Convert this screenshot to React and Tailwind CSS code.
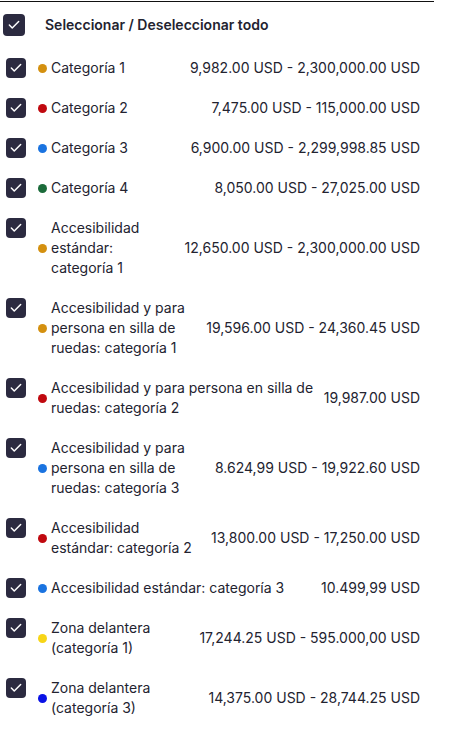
import { Check } from "lucide-react";

const rows = [
  { label: "Categoría 1", color: "bg-[#d4900f]", price: "9,982.00 USD - 2,300,000.00 USD" },
  { label: "Categoría 2", color: "bg-[#c0090f]", price: "7,475.00 USD - 115,000.00 USD" },
  { label: "Categoría 3", color: "bg-[#1a73e0]", price: "6,900.00 USD - 2,299,998.85 USD" },
  { label: "Categoría 4", color: "bg-[#1b6b3a]", price: "8,050.00 USD - 27,025.00 USD" },
  { label: "Accesibilidad estándar: categoría 1", color: "bg-[#d4900f]", price: "12,650.00 USD - 2,300,000.00 USD" },
  { label: "Accesibilidad y para persona en silla de ruedas: categoría 1", color: "bg-[#d4900f]", price: "19,596.00 USD - 24,360.45 USD" },
  { label: "Accesibilidad y para persona en silla de ruedas: categoría 2", color: "bg-[#c0090f]", price: "19,987.00 USD" },
  { label: "Accesibilidad y para persona en silla de ruedas: categoría 3", color: "bg-[#1a73e0]", price: "8.624,99 USD - 19,922.60 USD" },
  { label: "Accesibilidad estándar: categoría 2", color: "bg-[#c0090f]", price: "13,800.00 USD - 17,250.00 USD" },
  { label: "Accesibilidad estándar: categoría 3", color: "bg-[#1a73e0]", price: "10.499,99 USD" },
  { label: "Zona delantera (categoría 1)", color: "bg-[#f7d517]", price: "17,244.25 USD - 595.000,00 USD" },
  { label: "Zona delantera (categoría 3)", color: "bg-[#0a12e6]", price: "14,375.00 USD - 28,744.25 USD" },
];

const Box = ({ size = "w-5 h-5" }) => (
  <span className={`${size} shrink-0 rounded-[4px] bg-[#2b2a40] flex items-center justify-center`}>
    <Check className="w-3.5 h-3.5 text-white" strokeWidth={2.5} />
  </span>
);

const App = () => {
  return (
    <div
      className="w-[451px] min-h-[737px] bg-white text-[#232330] text-[14px] leading-5"
      style={{ fontFamily: "Inter, 'Noto Sans', sans-serif" }}
    >
      <div className="w-[434px] border-t border-[#111] mt-[1px]" />

      {/* Header */}
      <div className="flex items-center pl-[3px] pt-[12px]">
        <Box size="w-[22px] h-[22px]" />
        <span className="ml-5 font-semibold">Seleccionar / Deseleccionar todo</span>
      </div>

      {/* Rows */}
      <ul className="flex flex-col gap-5 pl-[6px] pr-[31px] pt-[22px]">
        {rows.map((r) => (
          <li key={r.label} className="flex items-start">
            <Box />
            <div className="flex flex-1 items-center justify-between gap-2 ml-3 self-stretch">
              <div className="flex items-center gap-1 min-w-0">
                <span className={`${r.color} w-[9px] h-[9px] rounded-full shrink-0`} />
                <span>{r.label}</span>
              </div>
              <span className="shrink-0 whitespace-nowrap">{r.price}</span>
            </div>
          </li>
        ))}
      </ul>
    </div>
  );
};

export default App;
